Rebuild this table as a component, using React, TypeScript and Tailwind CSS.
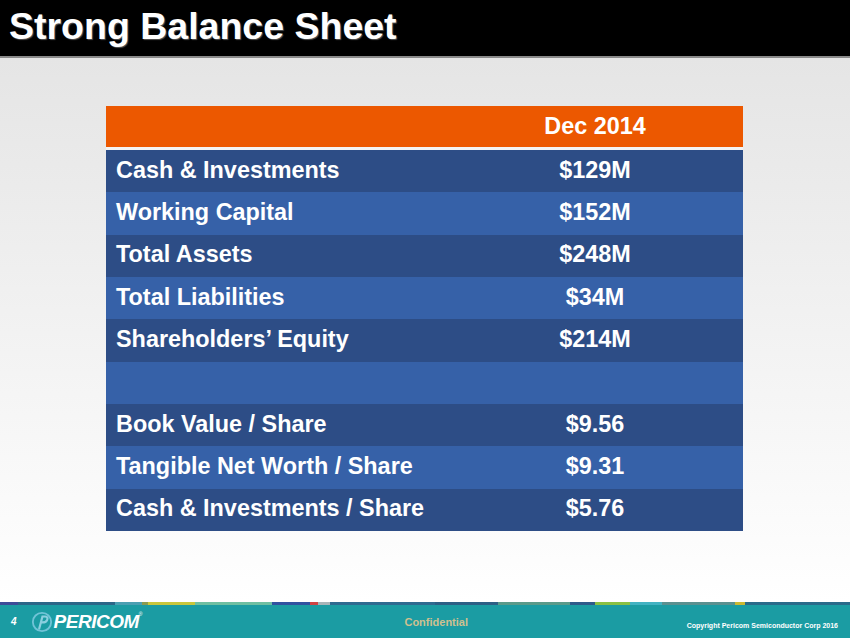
const ROWS = [
  { label: 'Cash & Investments', value: '$129M' },
  { label: 'Working Capital', value: '$152M' },
  { label: 'Total Assets', value: '$248M' },
  { label: 'Total Liabilities', value: '$34M' },
  { label: 'Shareholders’ Equity', value: '$214M' },
  { label: '', value: '' },
  { label: 'Book Value / Share', value: '$9.56' },
  { label: 'Tangible Net Worth / Share', value: '$9.31' },
  { label: 'Cash & Investments / Share', value: '$5.76' },
];

// footer colour stripe: [width, colour]
const STRIPE: [number, string][] = [
  [18, '#3d4c98'],
  [97, '#2c6688'],
  [27, '#4b9fb2'],
  [6, '#8a9a50'],
  [47, '#c9c63c'],
  [77, '#6fbfa2'],
  [38, '#3152a0'],
  [8, '#cf4343'],
  [12, '#a8b4b8'],
  [105, '#2f6a90'],
  [63, '#2d5f85'],
  [72, '#5b9a8a'],
  [25, '#2f5a8a'],
  [35, '#8ac043'],
  [32, '#42b2c2'],
  [73, '#5b9090'],
  [10, '#cbb832'],
  [105, '#2a6a8a'],
];

export default function App() {
  return (
    <div className="w-[850px] h-[638px] flex flex-col overflow-hidden font-['Liberation_Sans',Arial,sans-serif]">
      <header className="h-[58px] shrink-0 bg-black border-b-2 border-[#8a8a8a] flex items-center pl-[9px]">
        <h1 className="text-white font-bold text-[37.5px] leading-none -mt-[2px] [text-shadow:1px_1px_1px_#555]">
          Strong Balance Sheet
        </h1>
      </header>

      <main className="flex-1 bg-linear-to-b from-[#e5e5e5] to-[#ffffff] pt-[48px] pl-[106px]">
        <div className="w-[637px] flex flex-col">
          <div className="h-[44px] bg-[#ec5800] grid grid-cols-[341px_1fr] items-center border-b-[3px] border-[#f3f3f3]">
            <span />
            <span className="text-center text-white font-bold text-[23.4px] mt-[1px]">Dec 2014</span>
          </div>
          {ROWS.map((r, i) => (
            <div
              key={i}
              className={`h-[42.33px] grid grid-cols-[341px_1fr] items-center text-white font-bold text-[23.4px] ${
                i % 2 === 0 ? 'bg-[#2d4d86]' : 'bg-[#3661a8]'
              }`}
            >
              <span className="pl-[10px] -mt-[2px]">{r.label}</span>
              <span className="text-center -mt-[2px]">{r.value}</span>
            </div>
          ))}
        </div>
      </main>

      <footer className="shrink-0 flex flex-col">
        <div className="h-[3px] flex">
          {STRIPE.map(([w, c], i) => (
            <div key={i} style={{ width: w, backgroundColor: c }} />
          ))}
        </div>
        <div className="h-[33px] bg-[#1b9ca3] flex items-center relative">
          <span className="ml-[11px] text-white font-bold italic text-[10px]">4</span>
          <PericomMark className="ml-[14px] w-[22px] h-[22px]" />
          <span className="ml-[1px] text-white font-bold italic text-[19px] tracking-[-0.5px] leading-none">
            PERICOM
          </span>
          <span className="self-start mt-[6px] text-white text-[5px]">®</span>
          <span className="ml-[262px] mt-[2px] text-[#cfc08f] font-bold text-[11px]">Confidential</span>
          <span className="ml-auto mr-[12px] mt-[10px] text-white font-bold text-[7px]">
            Copyright Pericom Semiconductor Corp 2016
          </span>
        </div>
      </footer>
    </div>
  );
}

function PericomMark({ className = '' }: { className?: string }) {
  return (
    <svg viewBox="0 0 24 24" className={className}>
      <circle cx="12" cy="12" r="10" fill="none" stroke="#86cde3" strokeWidth="2" opacity="0.8" />
      <path d="M9 19 L12.5 6 H15.5 C18 6 18.5 8 17.5 10 C16.5 12 14.5 12.5 12.5 12.5 H11" fill="none" stroke="#9fd8ea" strokeWidth="2.4" strokeLinecap="round" opacity="0.85" />
    </svg>
  );
}
